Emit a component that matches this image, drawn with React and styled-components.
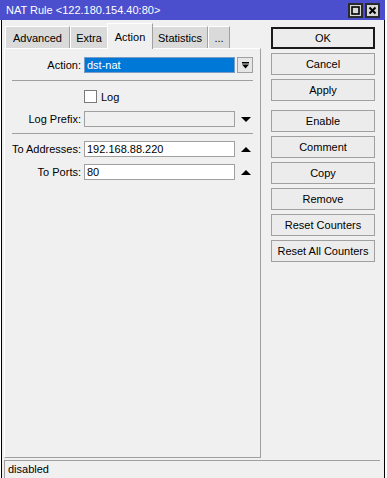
import React from 'react';
import styled, { createGlobalStyle } from 'styled-components';

const GlobalStyle = createGlobalStyle`
  html, body {
    margin: 0;
    padding: 0;
    background: #ffffff;
    overflow: hidden;
  }
  body {
    font-family: "Liberation Sans", Arial, sans-serif;
    font-size: 11px;
    color: #000;
  }
`;

const tabs = [
    { label: 'Advanced', width: 65 },
    { label: 'Extra', width: 38 },
    { label: 'Action', width: 46, active: true },
    { label: 'Statistics', width: 56 },
    { label: '...', width: 22 },
];

const buttons = [
    { label: 'OK', primary: true },
    { label: 'Cancel' },
    { label: 'Apply' },
    { label: 'Enable', spaced: true },
    { label: 'Comment' },
    { label: 'Copy' },
    { label: 'Remove' },
    { label: 'Reset Counters' },
    { label: 'Reset All Counters' },
];

// 窗口外框
const Window = styled.div`
  width: 385px;
  height: 478px;
  display: flex;
  flex-direction: column;
`;

const TitleBar = styled.div`
  height: 20px;
  flex: none;
  background: #4b4ecd;
  color: #fff;
  display: flex;
  align-items: center;
  padding: 0 6px;
  font-size: 11px;
`;

const TitleText = styled.div`
  flex: 1;
  white-space: nowrap;
`;

const TitleButtons = styled.div`
  display: flex;
  gap: 2px;
  margin-right: -1px;
`;

const TitleButton = styled.div`
  width: 15px;
  height: 15px;
  box-sizing: border-box;
  background: #d8d8d8;
  border: 2px solid #2a2a2a;
  display: flex;
  align-items: center;
  justify-content: center;
`;

const Frame = styled.div`
  flex: 1;
  margin-left: 1px;
  border-left: 1px solid #000;
  border-right: 1px solid #000;
  background: #f0f0f0;
  display: flex;
  flex-direction: column;
  min-height: 0;
`;

const Main = styled.div`
  flex: 1;
  display: flex;
  padding: 2px 9px 0 2px;
  gap: 10px;
  min-height: 0;
`;

const LeftPane = styled.div`
  width: 257px;
  display: flex;
  flex-direction: column;
`;

const TabStrip = styled.div`
  height: 26px;
  display: flex;
  align-items: flex-end;
  padding-left: 1px;
`;

const Tab = styled.div`
  box-sizing: border-box;
  width: ${p => p.$width}px;
  height: ${p => (p.$active ? 26 : 22)}px;
  margin: 0 ${p => (p.$active ? '-1px' : '0')};
  position: relative;
  z-index: ${p => (p.$active ? 2 : 1)};
  background: ${p => (p.$active ? '#f0f0f0' : '#dadada')};
  border-top: 1px solid #fff;
  border-left: 1px solid #fff;
  border-right: 1px solid #a0a0a0;
  display: flex;
  align-items: center;
  justify-content: center;
  padding-top: ${p => (p.$active ? 0 : 1)}px;
  margin-bottom: ${p => (p.$active ? -1 : 0)}px;
`;

const Panel = styled.div`
  flex: 1;
  box-sizing: border-box;
  border-top: 1px solid #fff;
  border-left: 1px solid #fff;
  border-right: 1px solid #a0a0a0;
  border-bottom: 1px solid #a0a0a0;
  padding: 8px 0 0 0;
  margin-bottom: 2px;
`;

const Row = styled.div`
  display: flex;
  align-items: center;
  height: 16px;
  margin-top: ${p => p.$gap || 0}px;
`;

const Label = styled.div`
  width: 76px;
  text-align: right;
  padding-right: 3px;
  white-space: nowrap;
`;

const Field = styled.div`
  box-sizing: border-box;
  width: 151px;
  height: 16px;
  border: 1px solid ${p => (p.$selected ? '#7a9cc4' : '#a0a0a0')};
  background: ${p => (p.$selected ? '#0078d7' : p.$disabled ? '#f0f0f0' : '#fff')};
  color: ${p => (p.$selected ? '#fff' : '#000')};
  padding: 0 0 0 2px;
  display: flex;
  align-items: center;
  white-space: nowrap;
`;

const DropButton = styled.div`
  box-sizing: border-box;
  width: 16px;
  height: 16px;
  margin-left: 2px;
  background: #e6e6e6;
  border: 1px solid #a0a0a0;
  display: flex;
  align-items: center;
  justify-content: center;
`;

const Arrow = styled.div`
  width: 16px;
  margin-left: 3px;
  display: flex;
  align-items: center;
  justify-content: center;
`;

const Separator = styled.div`
  height: 1px;
  background: #a0a0a0;
  margin: ${p => p.$top}px 7px 0 7px;
`;

const CheckRow = styled.label`
  display: flex;
  align-items: center;
  height: 13px;
  margin: 9px 0 0 79px;
  gap: 4px;
`;

const CheckBox = styled.span`
  box-sizing: border-box;
  width: 13px;
  height: 13px;
  background: #fff;
  border: 1px solid #7a7a7a;
`;

const ButtonColumn = styled.div`
  width: 104px;
  padding-top: 5px;
  display: flex;
  flex-direction: column;
  gap: 4px;
`;

const Button = styled.div`
  box-sizing: border-box;
  height: 22px;
  display: flex;
  align-items: center;
  justify-content: center;
  background: #ececec;
  border: ${p => (p.$primary ? '2px solid #1a1a1a' : '1px solid #a0a0a0')};
  margin-top: ${p => (p.$spaced ? 5 : 0)}px;
  white-space: nowrap;
`;

const StatusBar = styled.div`
  height: 18px;
  flex: none;
  box-sizing: border-box;
  margin: 0 4px 0 2px;
  border-top: 1px solid #a0a0a0;
  border-left: 1px solid #a0a0a0;
  padding: 2px 0 0 3px;
`;

const DownBarIcon = () => (
    <svg width="9" height="9" viewBox="0 0 9 9">
        <rect x="1" y="1" width="7" height="1.5" fill="#000" />
        <path d="M1 3.5 H8 L4.5 7.5 Z" fill="#000" />
    </svg>
);

const Triangle = ({ up }) => (
    <svg width="10" height="5" viewBox="0 0 10 5">
        <path d={up ? 'M0 5 H10 L5 0 Z' : 'M0 0 H10 L5 5 Z'} fill="#000" />
    </svg>
);

const NatRule = () => {
    return (
        <Window>
            <GlobalStyle />
            <TitleBar>
                <TitleText>NAT Rule &lt;122.180.154.40:80&gt;</TitleText>
                <TitleButtons>
                    <TitleButton>
                        <svg width="9" height="9" viewBox="0 0 9 9">
                            <rect x="1" y="1" width="7" height="7" fill="none" stroke="#000" strokeWidth="1.6" />
                        </svg>
                    </TitleButton>
                    <TitleButton>
                        <svg width="9" height="9" viewBox="0 0 9 9">
                            <path d="M1.5 1.5 L7.5 7.5 M7.5 1.5 L1.5 7.5" stroke="#000" strokeWidth="2" />
                        </svg>
                    </TitleButton>
                </TitleButtons>
            </TitleBar>
            <Frame>
                <Main>
                    <LeftPane>
                        <TabStrip>
                            {tabs.map(t => (
                                <Tab key={t.label} $width={t.width} $active={t.active}>
                                    {t.label}
                                </Tab>
                            ))}
                        </TabStrip>
                        <Panel>
                            <Row>
                                <Label>Action:</Label>
                                <Field $selected>dst-nat</Field>
                                <DropButton>
                                    <DownBarIcon />
                                </DropButton>
                            </Row>
                            <Separator $top={7} />
                            <CheckRow>
                                <CheckBox />
                                Log
                            </CheckRow>
                            <Row $gap={8}>
                                <Label>Log Prefix:</Label>
                                <Field $disabled />
                                <Arrow>
                                    <Triangle />
                                </Arrow>
                            </Row>
                            <Separator $top={6} />
                            <Row $gap={7}>
                                <Label>To Addresses:</Label>
                                <Field>192.168.88.220</Field>
                                <Arrow>
                                    <Triangle up />
                                </Arrow>
                            </Row>
                            <Row $gap={7}>
                                <Label>To Ports:</Label>
                                <Field>80</Field>
                                <Arrow>
                                    <Triangle up />
                                </Arrow>
                            </Row>
                        </Panel>
                    </LeftPane>
                    <ButtonColumn>
                        {buttons.map(b => (
                            <Button key={b.label} $primary={b.primary} $spaced={b.spaced}>
                                {b.label}
                            </Button>
                        ))}
                    </ButtonColumn>
                </Main>
                <StatusBar>disabled</StatusBar>
            </Frame>
        </Window>
    );
};

export default NatRule;
